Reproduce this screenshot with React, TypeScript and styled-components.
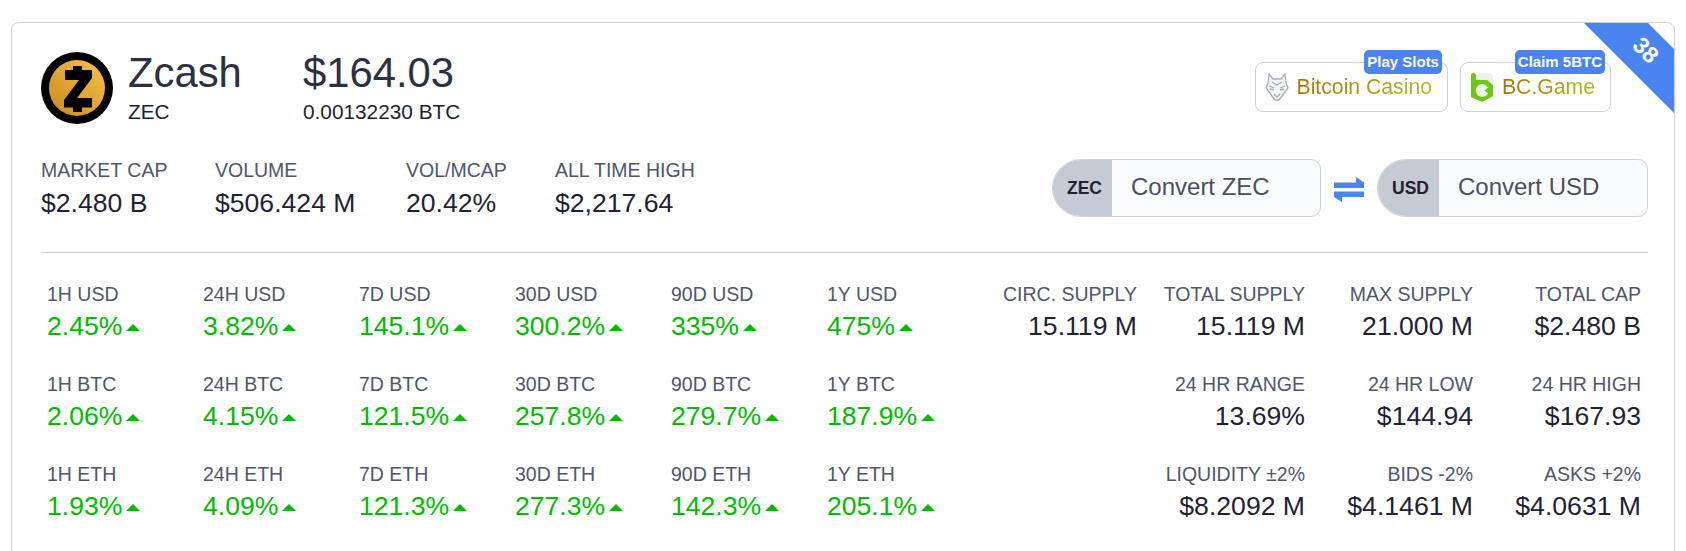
import React from "react";
import { createGlobalStyle, styled } from "styled-components";

const GlobalStyle = createGlobalStyle`
  html, body {
    margin: 0;
    padding: 0;
    height: 551px;
    overflow: hidden;
    background: #fefefe;
    font-family: "Liberation Sans", Arial, sans-serif;
  }
`;

const Page = styled.div`
  height: 551px;
  box-sizing: border-box;
  padding: 22px 11px 0;
  overflow: hidden;
`;

const Card = styled.section`
  position: relative;
  height: 560px;
  box-sizing: border-box;
  background: #fff;
  border: 1px solid #cbd0da;
  border-radius: 8px;
  padding: 29px 26px 0 29px;
  overflow: hidden;
`;

const Ribbon = styled.div`
  position: absolute;
  top: 0;
  right: 0;
  width: 90px;
  height: 90px;
  background: #4a84f0;
  clip-path: polygon(0 0, 64px 0, 90px 26px, 90px 90px);
`;

const RibbonCount = styled.span`
  position: absolute;
  top: 14px;
  right: 8px;
  width: 40px;
  text-align: center;
  transform: rotate(45deg);
  color: #fff;
  font-size: 23px;
  line-height: 26px;
  font-weight: 700;
`;

const TopRow = styled.div`
  display: flex;
  justify-content: space-between;
  align-items: flex-start;
`;

const Identity = styled.div`
  display: flex;
`;

const Logo = styled.svg`
  width: 72px;
  height: 72px;
  margin-right: 15px;
  flex: none;
`;

const NameBlock = styled.div`
  width: 175px;
  margin-top: -3px;
`;

const Title = styled.div`
  font-size: 41.8px;
  line-height: 47px;
  color: #2d3040;
`;

const Sub = styled.div`
  font-size: 20.8px;
  line-height: 24px;
  margin-top: 4px;
  color: #1f2233;
`;

const Sponsors = styled.div`
  display: flex;
  gap: 12px;
  margin: 10px 37px 0 0;
`;

const Sponsor = styled.a`
  position: relative;
  display: flex;
  align-items: center;
  gap: 8px;
  height: 50px;
  box-sizing: border-box;
  padding: 0 15px 0 9px;
  border: 1px solid #cbd0da;
  border-radius: 8px;
  background: #fff;
`;

const SponsorName = styled.span`
  font-size: 21.2px;
  background: linear-gradient(90deg, #ad7400, #a7c020);
  -webkit-background-clip: text;
  background-clip: text;
  color: transparent;
`;

const Tag = styled.span`
  position: absolute;
  top: -13px;
  right: 5px;
  height: 24px;
  padding: 0 3px;
  border-radius: 5px;
  background: #4a84f0;
  color: #fff;
  font-size: 15px;
  font-weight: 700;
  line-height: 24px;
  white-space: nowrap;
`;

const SecondRow = styled.div`
  display: flex;
  justify-content: space-between;
  align-items: center;
  margin-top: 34px;
`;

const Headline = styled.div`
  display: grid;
  grid-template-columns: 174px 191px 149px auto;
`;

const Label = styled.div`
  font-size: 19.5px;
  line-height: 24px;
  color: #50566a;
  white-space: nowrap;
`;

const Value = styled.div`
  font-size: 26.6px;
  line-height: 32px;
  margin-top: 5px;
  color: #1f2233;
  white-space: nowrap;
`;

const StatValue = styled(Value)`
  margin-top: 4px;
`;

const Converters = styled.div`
  display: flex;
  align-items: center;
  margin-bottom: 1px;
`;

const Converter = styled.div<{ $width: number }>`
  display: flex;
  width: ${({ $width }) => $width}px;
  height: 58px;
  box-sizing: border-box;
  border: 1px solid #cbd0da;
  border-radius: 29px 10px 10px 29px;
  background: #fafbfd;
  overflow: hidden;
`;

const Unit = styled.span`
  display: flex;
  align-items: center;
  margin: -1px 0 -1px -1px;
  padding: 0 10px 0 15px;
  background: #c5cad4;
  color: #1f2233;
  font-size: 17.5px;
  font-weight: 700;
`;

const Prompt = styled.span`
  display: flex;
  align-items: center;
  padding: 0 0 2px 19px;
  font-size: 24px;
  color: #4a5060;
`;

const Swap = styled.svg`
  width: 30px;
  height: 25px;
  margin: 2px 13px 0;
  flex: none;
`;

const Divider = styled.hr`
  height: 1px;
  margin: 33px 0 0;
  border: 0;
  background: #cbd0da;
`;

const Stats = styled.div`
  display: flex;
  justify-content: space-between;
  margin-top: 29px;
`;

const ChangeGrid = styled.div`
  display: grid;
  grid-template-columns: repeat(5, 156px) 140px;
  grid-auto-rows: 90px;
  padding-left: 6px;
`;

const SupplyGrid = styled.div`
  display: grid;
  grid-template-columns: repeat(4, 168px);
  grid-auto-rows: 90px;
  margin-right: 7px;
  text-align: right;
`;

const Change = styled(StatValue)`
  display: flex;
  align-items: center;
  gap: 4px;
  color: #00bb00;
`;

const Up = styled.i`
  width: 0;
  height: 0;
  margin-top: 2px;
  border-left: 7px solid transparent;
  border-right: 7px solid transparent;
  border-bottom: 7px solid #00bb00;
`;

const PERIODS = ["1H", "24H", "7D", "30D", "90D", "1Y"];
const CHANGES: Record<string, string[]> = {
  USD: ["2.45%", "3.82%", "145.1%", "300.2%", "335%", "475%"],
  BTC: ["2.06%", "4.15%", "121.5%", "257.8%", "279.7%", "187.9%"],
  ETH: ["1.93%", "4.09%", "121.3%", "277.3%", "142.3%", "205.1%"],
};

const SUPPLY = [
  ["CIRC. SUPPLY", "15.119 M"],
  ["TOTAL SUPPLY", "15.119 M"],
  ["MAX SUPPLY", "21.000 M"],
  ["TOTAL CAP", "$2.480 B"],
  ["", ""],
  ["24 HR RANGE", "13.69%"],
  ["24 HR LOW", "$144.94"],
  ["24 HR HIGH", "$167.93"],
  ["", ""],
  ["LIQUIDITY ±2%", "$8.2092 M"],
  ["BIDS -2%", "$4.1461 M"],
  ["ASKS +2%", "$4.0631 M"],
];

const HEADLINE = [
  ["MARKET CAP", "$2.480 B"],
  ["VOLUME", "$506.424 M"],
  ["VOL/MCAP", "20.42%"],
  ["ALL TIME HIGH", "$2,217.64"],
];

const App: React.FC = () => (
  <Page>
    <GlobalStyle />
    <Card>
      <Ribbon>
        <RibbonCount>38</RibbonCount>
      </Ribbon>

      <TopRow>
        <Identity>
          <Logo viewBox="0 0 72 72">
            <defs>
              <linearGradient id="zec" x1="0" y1="1" x2="1" y2="0">
                <stop offset="0" stopColor="#c98a1e" />
                <stop offset="1" stopColor="#f8c14c" />
              </linearGradient>
            </defs>
            <circle cx="36" cy="36" r="36" fill="#000" />
            <circle cx="36" cy="36" r="28" fill="url(#zec)" />
            <path
              d="M32 14h9v4h10v8L36 46h15v9.5H41V60h-9v-4.5H23V48l15-20H24V18h8z"
              fill="#000"
            />
          </Logo>
          <NameBlock>
            <Title>Zcash</Title>
            <Sub>ZEC</Sub>
          </NameBlock>
          <NameBlock>
            <Title>$164.03</Title>
            <Sub>0.00132230 BTC</Sub>
          </NameBlock>
        </Identity>

        <Sponsors>
          <Sponsor>
            <svg width="24" height="28" viewBox="0 0 24 28" fill="#f1f3f5" stroke="#a4adba" strokeWidth="1.3">
              <path d="M4 1l4 5h8l4-5 1 9 2 5-6 8-3 4H10l-3-4-6-8 2-5z" />
              <path d="M4 13l5 2M20 13l-5 2M9 21l3 3 3-3M7 9l5 3 5-3M5 16l4 1M19 16l-4 1" fill="none" />
            </svg>
            <SponsorName>Bitcoin Casino</SponsorName>
            <Tag>Play Slots</Tag>
          </Sponsor>
          <Sponsor>
            <svg width="24" height="30" viewBox="0 0 24 30">
              <path d="M6 1h14l3 3v9l-6-5H6z" fill="#efefef" />
              <path
                d="M1 3.5a2.5 2.5 0 0 1 5 0V8h11l6 5v11l-11 6-11-5z"
                fill="#6cc813"
              />
              <path d="M18 15.5A6.5 6.5 0 1 0 18 21.5l-3.5-3z" fill="#f1f7e6" />
            </svg>
            <SponsorName>BC.Game</SponsorName>
            <Tag>Claim 5BTC</Tag>
          </Sponsor>
        </Sponsors>
      </TopRow>

      <SecondRow>
        <Headline>
          {HEADLINE.map(([label, value]) => (
            <div key={label}>
              <Label>{label}</Label>
              <Value>{value}</Value>
            </div>
          ))}
        </Headline>
        <Converters>
          <Converter $width={269}>
            <Unit>ZEC</Unit>
            <Prompt>Convert ZEC</Prompt>
          </Converter>
          <Swap viewBox="0 0 30 25" fill="#4a84f0">
            <path d="M0 5.5h22V0l8 5.5V11H0zM30 14.5H0V20l8 5v-5h22z" />
          </Swap>
          <Converter $width={271}>
            <Unit>USD</Unit>
            <Prompt>Convert USD</Prompt>
          </Converter>
        </Converters>
      </SecondRow>

      <Divider />

      <Stats>
        <ChangeGrid>
          {Object.entries(CHANGES).map(([quote, values]) =>
            values.map((value, i) => (
              <div key={quote + PERIODS[i]}>
                <Label>
                  {PERIODS[i]} {quote}
                </Label>
                <Change>
                  {value}
                  <Up />
                </Change>
              </div>
            ))
          )}
        </ChangeGrid>
        <SupplyGrid>
          {SUPPLY.map(([label, value], i) => (
            <div key={i}>
              <Label>{label}</Label>
              <StatValue>{value}</StatValue>
            </div>
          ))}
        </SupplyGrid>
      </Stats>
    </Card>
  </Page>
);

export default App;
